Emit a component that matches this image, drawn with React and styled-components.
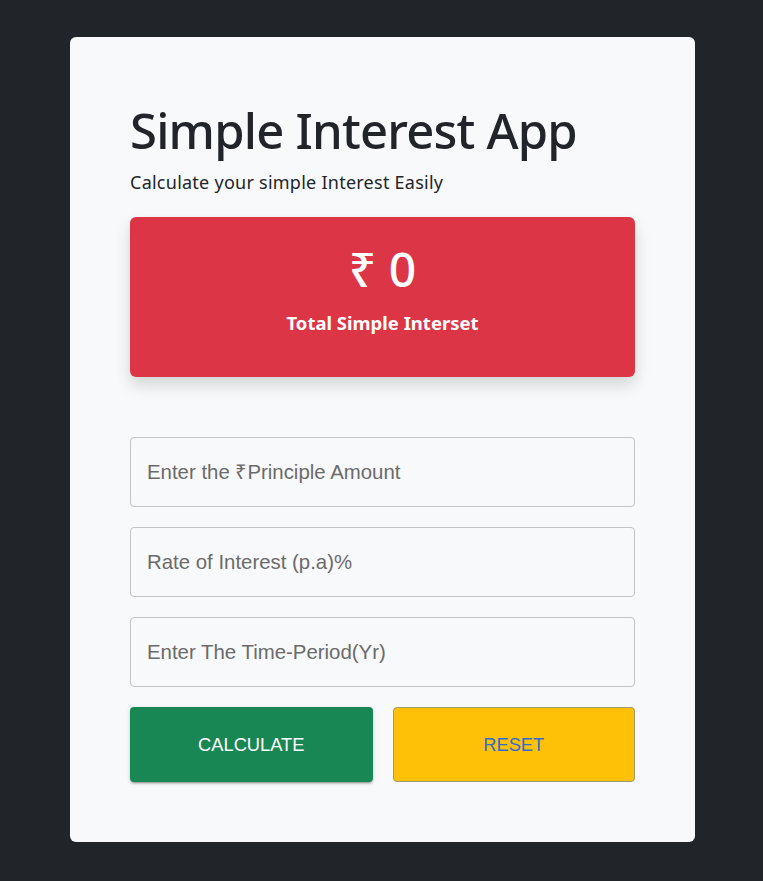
import React, { useState } from 'react';
import styled, { createGlobalStyle } from 'styled-components';

const GlobalStyle = createGlobalStyle`
	html, body {
		margin: 0;
		padding: 0;
		background: #212529;
	}
	* {
		box-sizing: border-box;
	}
`;

export default function App() {
	const [principle, setPrinciple] = useState('');
	const [rate, setRate] = useState('');
	const [time, setTime] = useState('');
	const [interest, setInterest] = useState(0);

	const calculate = e => {
		e.preventDefault();
		setInterest((Number(principle) * Number(rate) * Number(time)) / 100);
	};

	const reset = () => {
		setPrinciple('');
		setRate('');
		setTime('');
		setInterest(0);
	};

	return (
		<Page>
			<GlobalStyle />
			<Card>
				<Title>Simple Interest App</Title>
				<Subtitle>Calculate your simple Interest Easily</Subtitle>
				<ResultBox>
					<Amount>₹ {interest}</Amount>
					<ResultLabel>Total Simple Interset</ResultLabel>
				</ResultBox>
				<Form onSubmit={calculate}>
					<Field
						type='number'
						placeholder='Enter the ₹Principle Amount'
						value={principle}
						onChange={e => setPrinciple(e.target.value)}
					/>
					<Field
						type='number'
						placeholder='Rate of Interest (p.a)%'
						value={rate}
						onChange={e => setRate(e.target.value)}
					/>
					<Field
						type='number'
						placeholder='Enter The Time-Period(Yr)'
						value={time}
						onChange={e => setTime(e.target.value)}
					/>
					<Buttons>
						<Button type='submit' variant='calculate'>
							Calculate
						</Button>
						<Button type='button' variant='reset' onClick={reset}>
							Reset
						</Button>
					</Buttons>
				</Form>
			</Card>
		</Page>
	);
}

const Page = styled.div`
	min-height: 881px;
	padding: 37px 0 0 70px;
	font-family: 'Noto Sans', 'Open Sans', sans-serif;
`;

const Card = styled.div`
	width: 625px;
	height: 805px;
	background: #f8f9fa;
	border-radius: 6px;
	padding: 60px 60px 0;
`;

const Title = styled.h1`
	margin: 0;
	font-size: 49px;
	font-weight: 500;
	line-height: 66px;
	color: #212529;
	letter-spacing: -0.8px;
`;

const Subtitle = styled.p`
	margin: 6px 0 0;
	font-size: 18px;
	line-height: 27px;
	color: #212529;
	letter-spacing: 0.25px;
`;

const ResultBox = styled.div`
	margin-top: 21px;
	height: 160px;
	background: #dc3545;
	border-radius: 6px;
	box-shadow: 0 8px 16px rgba(0, 0, 0, 0.15);
	color: white;
	display: flex;
	flex-direction: column;
	align-items: center;
	padding-top: 22px;
`;

const Amount = styled.div`
	font-size: 48px;
	font-weight: 500;
	line-height: 60px;
`;

const ResultLabel = styled.div`
	margin-top: 12px;
	font-size: 18.5px;
	font-weight: 700;
	line-height: 24px;
`;

const Form = styled.form`
	margin-top: 60px;
	display: flex;
	flex-direction: column;
	gap: 20px;
`;

const Field = styled.input`
	height: 70px;
	width: 100%;
	border: 1px solid #c4c4c4;
	border-radius: 4px;
	background: #f8f9fa;
	padding: 0 16px;
	font-family: 'Liberation Sans', Arial, sans-serif;
	font-size: 20.4px;
	color: #212529;
	outline: none;
	-moz-appearance: textfield;
	&::placeholder {
		color: #6b6b6b;
	}
	&::-webkit-outer-spin-button,
	&::-webkit-inner-spin-button {
		-webkit-appearance: none;
		margin: 0;
	}
`;

const Buttons = styled.div`
	display: grid;
	grid-template-columns: 1fr 1fr;
	gap: 20px;
`;

const Button = styled.button`
	height: 75px;
	border-radius: 4px;
	font-family: 'Liberation Sans', Arial, sans-serif;
	font-size: 18.3px;
	text-transform: uppercase;
	cursor: pointer;
	border: 1px solid ${p => (p.variant === 'reset' ? '#9e9a6a' : 'transparent')};
	background: ${p => (p.variant === 'reset' ? '#ffc107' : '#198754')};
	color: ${p => (p.variant === 'reset' ? '#2f6bd0' : '#ffffff')};
	box-shadow: ${p =>
		p.variant === 'reset'
			? 'none'
			: '0 3px 1px -2px rgba(0,0,0,0.2), 0 2px 2px 0 rgba(0,0,0,0.14), 0 1px 5px 0 rgba(0,0,0,0.12)'};
`;
